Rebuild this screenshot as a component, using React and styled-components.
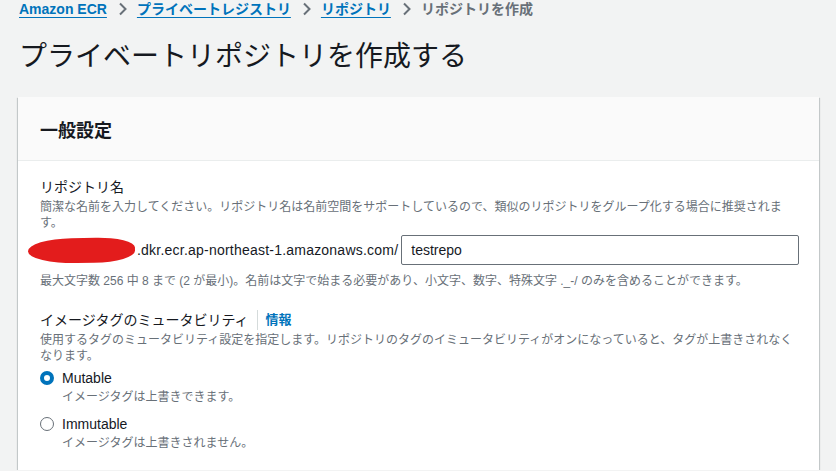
import styled, { createGlobalStyle } from "styled-components"

const GlobalStyle = createGlobalStyle`
    html, body {
        margin: 0;
        padding: 0;
        background-color: #f2f3f3;
    }
    body {
        font-family: "Liberation Sans", "Noto Sans CJK JP", sans-serif;
        color: #16191f;
    }
`

const crumbs = [
    { label: "Amazon ECR", link: true },
    { label: "プライベートレジストリ", link: true },
    { label: "リポジトリ", link: true },
    { label: "リポジトリを作成", link: false },
]

function Chevron() {
    return (
        <svg width="10" height="14" viewBox="0 0 10 14">
            <path d="M2 1.5 L7.5 7 L2 12.5" fill="none" stroke="#687078" strokeWidth="2" />
        </svg>
    )
}

export default function App() {
    return (
        <>
            <GlobalStyle />
            <Page>
                <Breadcrumb>
                    {crumbs.map((c, i) => (
                        <Crumb key={c.label}>
                            {i > 0 && <Sep><Chevron /></Sep>}
                            <CrumbText $link={c.link}>{c.label}</CrumbText>
                        </Crumb>
                    ))}
                </Breadcrumb>

                <Title>プライベートリポジトリを作成する</Title>

                <Card>
                    <CardHeader>一般設定</CardHeader>
                    <CardBody>
                        <Label>リポジトリ名</Label>
                        <Description>
                            簡潔な名前を入力してください。リポジトリ名は名前空間をサポートしているので、類似のリポジトリをグループ化する場合に推奨されます。
                        </Description>
                        <UriRow>
                            <Redacted />
                            <Domain>.dkr.ecr.ap-northeast-1.amazonaws.com/</Domain>
                            <Input defaultValue="testrepo" />
                        </UriRow>
                        <Hint>
                            最大文字数 256 中 8 まで (2 が最小)。名前は文字で始まる必要があり、小文字、数字、特殊文字 ._-/ のみを含めることができます。
                        </Hint>

                        <Label $top={21}>
                            イメージタグのミュータビリティ
                            <Info>情報</Info>
                        </Label>
                        <Description>
                            使用するタグのミュータビリティ設定を指定します。リポジトリのタグのイミュータビリティがオンになっていると、タグが上書きされなくなります。
                        </Description>

                        <RadioOption $top={4}>
                            <Radio $checked />
                            <RadioText>
                                <RadioLabel>Mutable</RadioLabel>
                                <RadioDesc>イメージタグは上書きできます。</RadioDesc>
                            </RadioText>
                        </RadioOption>
                        <RadioOption $top={9}>
                            <Radio />
                            <RadioText>
                                <RadioLabel>Immutable</RadioLabel>
                                <RadioDesc>イメージタグは上書きされません。</RadioDesc>
                            </RadioText>
                        </RadioOption>
                    </CardBody>
                </Card>
            </Page>
        </>
    )
}

const Page = styled.div`
    padding: 0 17px 0 18px;
`

const Breadcrumb = styled.nav`
    display: flex;
    align-items: center;
    height: 18px;
    padding-left: 1px;
    font-size: 14px;
    font-weight: 700;
    line-height: 18px;
`

const Crumb = styled.span`
    display: flex;
    align-items: center;
`

const Sep = styled.span`
    display: flex;
    align-items: center;
    margin: 0 9px 0 11px;
`

const CrumbText = styled.span`
    color: ${(p) => (p.$link ? "#0073bb" : "#687078")};
    text-decoration: ${(p) => (p.$link ? "underline" : "none")};
    text-underline-offset: 3px;
    text-decoration-thickness: 1px;
`

const Title = styled.h1`
    margin: 21px 0 0 1px;
    font-size: 28px;
    font-weight: 400;
    line-height: 36px;
    color: #16191f;
`

const Card = styled.section`
    margin-top: 22px;
    background-color: #ffffff;
    box-shadow: 0 1px 1px 0 rgba(0, 28, 36, 0.3), 1px 1px 1px 0 rgba(0, 28, 36, 0.15), -1px 1px 1px 0 rgba(0, 28, 36, 0.15);
`

const CardHeader = styled.h2`
    margin: 0;
    height: 63px;
    padding: 0 22px;
    display: flex;
    align-items: center;
    background-color: #fafafa;
    border-bottom: 1px solid #eaeded;
    font-size: 18px;
    font-weight: 700;
    color: #16191f;
`

const CardBody = styled.div`
    padding: 16px 18px 19px 22px;
    display: flex;
    flex-direction: column;
`

const Label = styled.div`
    margin-top: ${(p) => p.$top || 0}px;
    display: flex;
    align-items: center;
    font-size: 14px;
    line-height: 20px;
    color: #16191f;
`

const Info = styled.span`
    margin-left: 8px;
    padding-left: 8px;
    border-left: 1px solid #d5dbdb;
    color: #0073bb;
    font-weight: 700;
    font-size: 13px;
`

const Description = styled.div`
    margin-top: 2px;
    font-size: 12px;
    line-height: 16px;
    color: #687078;
`

const UriRow = styled.div`
    margin-top: 4px;
    display: flex;
    align-items: center;
    margin-left: -12px;
`

const Redacted = styled.span`
    width: 107px;
    height: 25px;
    background-color: #e31c1c;
    border-radius: 45% 40% 42% 50% / 55% 45% 50% 55%;
    transform: rotate(-1deg);
`

const Domain = styled.span`
    margin-left: 2px;
    font-size: 14px;
    letter-spacing: 0.22px;
    color: #16191f;
    white-space: nowrap;
`

const Input = styled.input`
    flex: 1;
    height: 30px;
    box-sizing: border-box;
    margin: 0 2px 0 3px;
    padding: 0 9px;
    border: 1px solid #687078;
    border-radius: 2px;
    font-family: "Liberation Sans", sans-serif;
    font-size: 14px;
    color: #16191f;
    outline: none;
`

const Hint = styled.div`
    margin-top: 8px;
    font-size: 12px;
    line-height: 16px;
    color: #687078;
`

const RadioOption = styled.label`
    margin-top: ${(p) => p.$top}px;
    display: flex;
    align-items: flex-start;
`

const Radio = styled.span`
    box-sizing: border-box;
    width: 14px;
    height: 14px;
    margin-top: 3px;
    margin-right: 8px;
    border-radius: 50%;
    border: ${(p) => (p.$checked ? "4px solid #0073bb" : "1px solid #687078")};
    background-color: #ffffff;
`

const RadioText = styled.div`
    display: flex;
    flex-direction: column;
`

const RadioLabel = styled.span`
    font-size: 14px;
    line-height: 20px;
    color: #16191f;
`

const RadioDesc = styled.span`
    margin-top: 1px;
    font-size: 12px;
    line-height: 16px;
    color: #687078;
`
